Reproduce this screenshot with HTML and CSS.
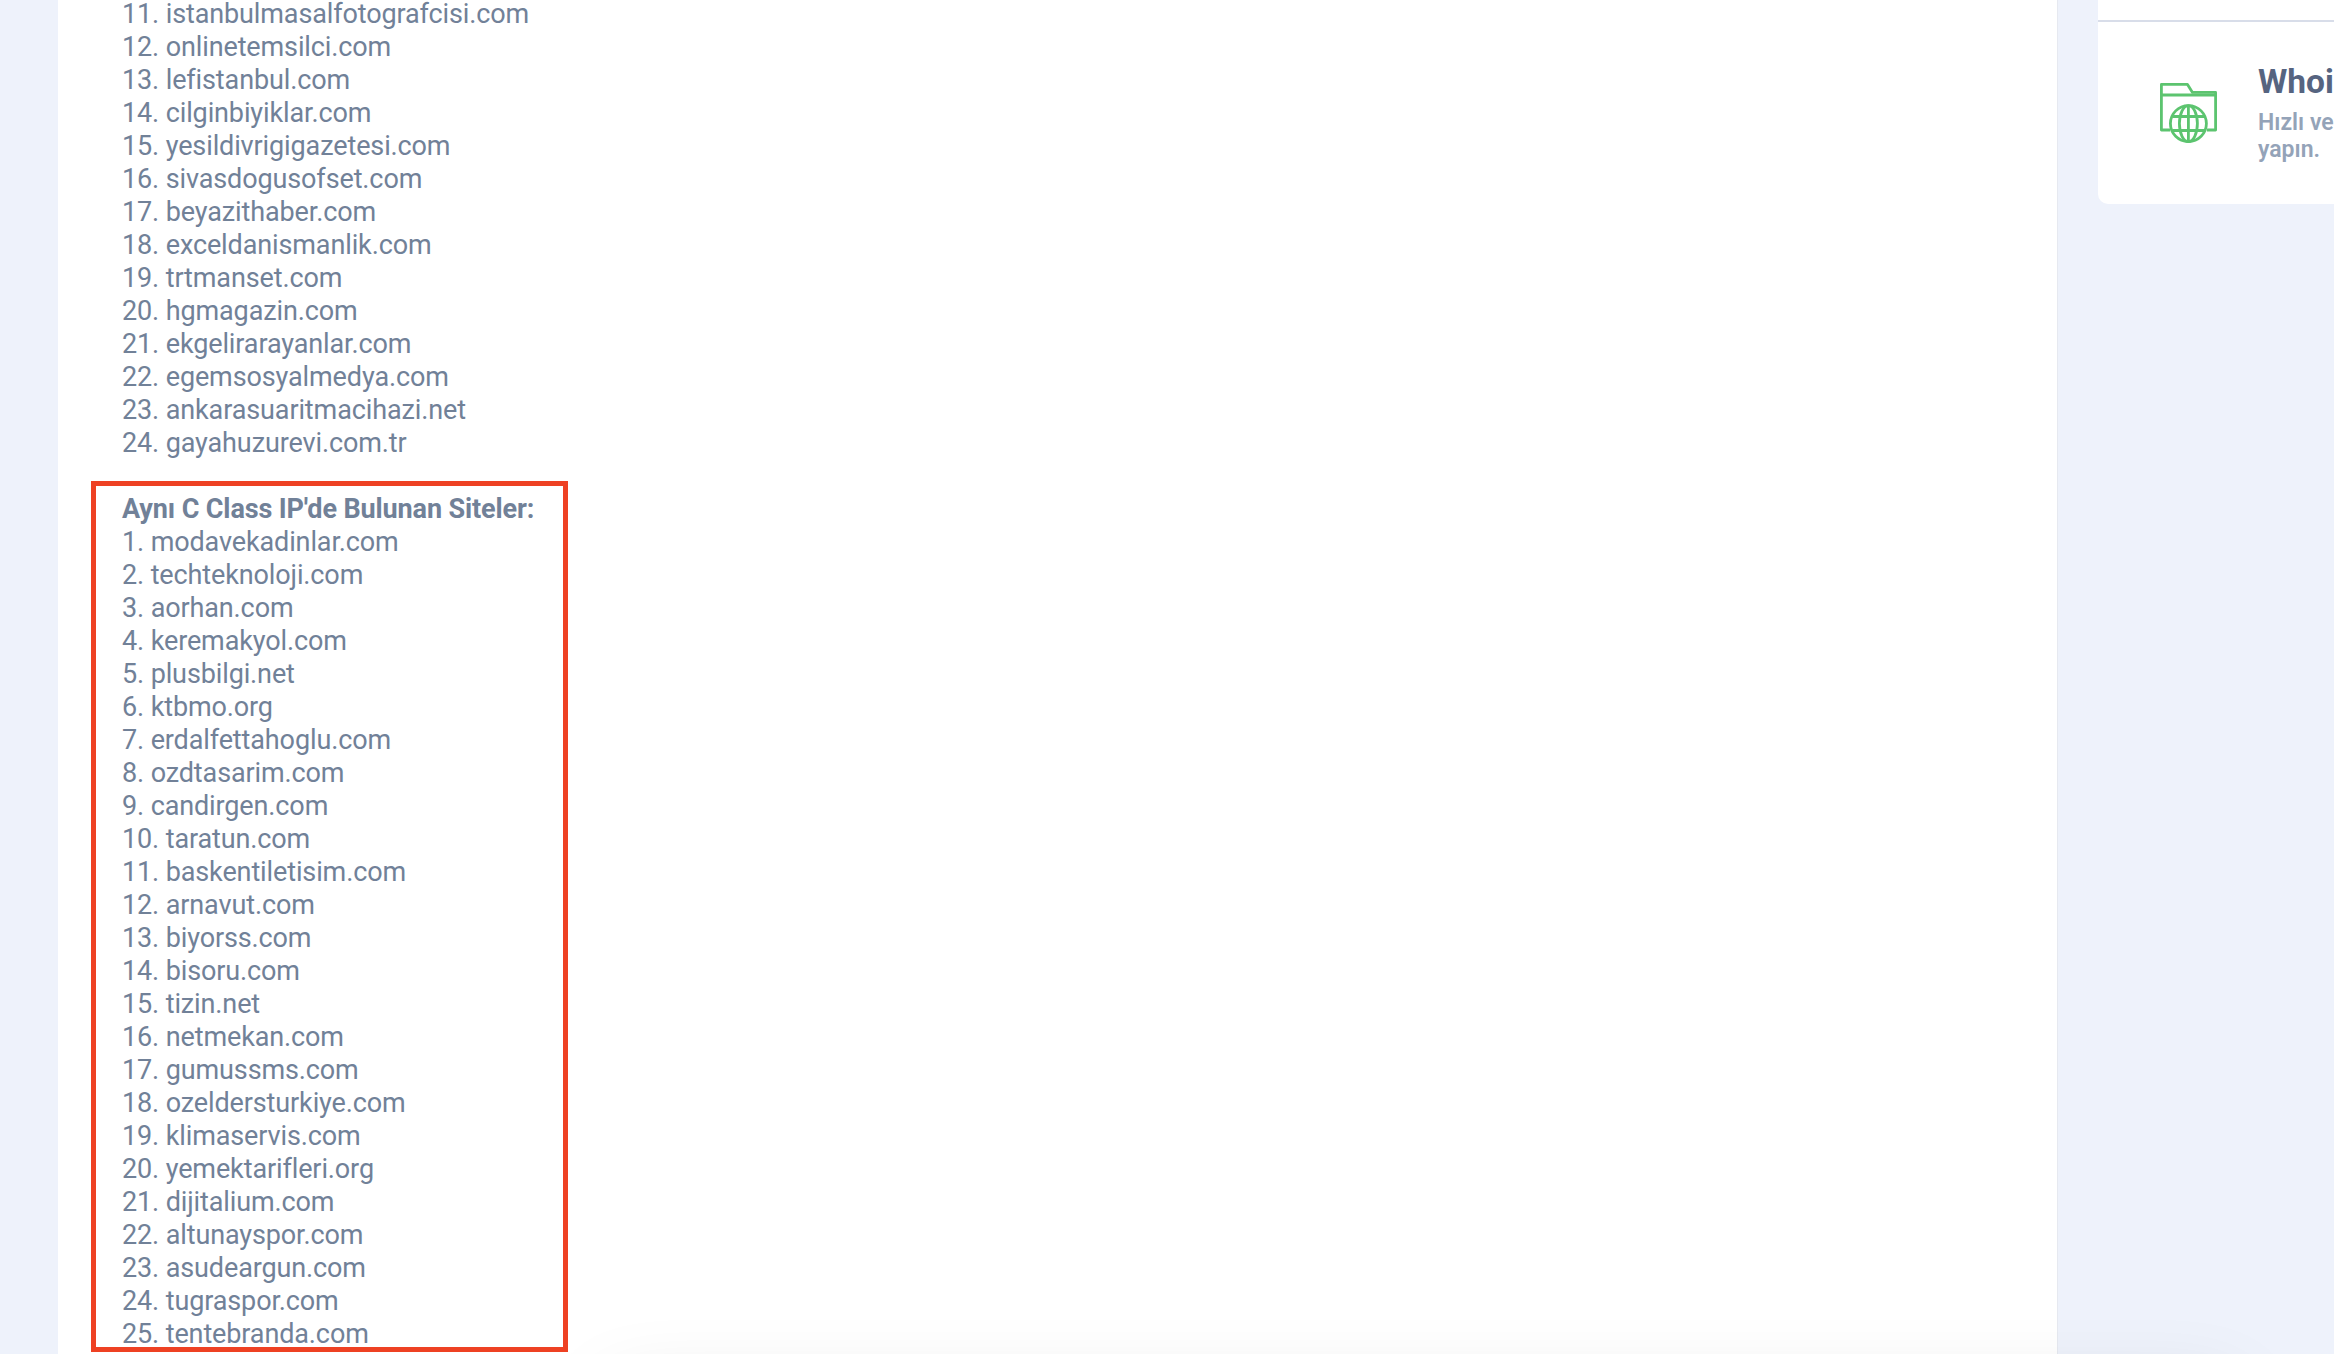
FILE: index.html
```html
<!DOCTYPE html>
<html lang="tr">
<head>
<meta charset="utf-8">
<title>Whois</title>
<link rel="stylesheet" href="styles.css">
</head>
<body>
<div class="page">
  <main class="main">
    <div class="sites">
      <div>11. istanbulmasalfotografcisi.com</div>
      <div>12. onlinetemsilci.com</div>
      <div>13. lefistanbul.com</div>
      <div>14. cilginbiyiklar.com</div>
      <div>15. yesildivrigigazetesi.com</div>
      <div>16. sivasdogusofset.com</div>
      <div>17. beyazithaber.com</div>
      <div>18. exceldanismanlik.com</div>
      <div>19. trtmanset.com</div>
      <div>20. hgmagazin.com</div>
      <div>21. ekgelirarayanlar.com</div>
      <div>22. egemsosyalmedya.com</div>
      <div>23. ankarasuaritmacihazi.net</div>
      <div>24. gayahuzurevi.com.tr</div>
    </div>
    <div class="sites marked">
      <strong>Aynı C Class IP'de Bulunan Siteler:</strong>
      <div>1. modavekadinlar.com</div>
      <div>2. techteknoloji.com</div>
      <div>3. aorhan.com</div>
      <div>4. keremakyol.com</div>
      <div>5. plusbilgi.net</div>
      <div>6. ktbmo.org</div>
      <div>7. erdalfettahoglu.com</div>
      <div>8. ozdtasarim.com</div>
      <div>9. candirgen.com</div>
      <div>10. taratun.com</div>
      <div>11. baskentiletisim.com</div>
      <div>12. arnavut.com</div>
      <div>13. biyorss.com</div>
      <div>14. bisoru.com</div>
      <div>15. tizin.net</div>
      <div>16. netmekan.com</div>
      <div>17. gumussms.com</div>
      <div>18. ozeldersturkiye.com</div>
      <div>19. klimaservis.com</div>
      <div>20. yemektarifleri.org</div>
      <div>21. dijitalium.com</div>
      <div>22. altunayspor.com</div>
      <div>23. asudeargun.com</div>
      <div>24. tugraspor.com</div>
      <div>25. tentebranda.com</div>
    </div>
  </main>
  <aside class="side">
    <div class="tool">
      <svg class="tool-icon" viewBox="0 0 57 60" fill="none" stroke="#5cc46f" stroke-width="2.8" stroke-linejoin="round">
        <path d="M10 47H1.4V1.4H27.5L32.5 9.4H55.6V47H47"/>
        <path d="M1.4 12H55.6"/>
        <circle cx="28.4" cy="40.6" r="18"/>
        <ellipse cx="28.4" cy="40.6" rx="9" ry="18"/>
        <path d="M28.4 22.6V58.6M12.5 33.5H44.3M12.5 47.5H44.3"/>
      </svg>
      <div class="tool-text">
        <div class="tool-title">Whois Sorgulama</div>
        <div class="tool-sub">Hızlı ve kolay sorgulama<br>yapın.</div>
      </div>
    </div>
  </aside>
</div>
<div class="floating"></div>
</body>
</html>
```
FILE: styles.css
```css
html, body {
  margin: 0;
  height: 100%;
  overflow: hidden;
}
body {
  background: #eef2fb;
  font-family: Roboto, "Liberation Sans", sans-serif;
}
.page {
  display: flex;
  align-items: flex-start;
  height: 1354px;
  padding-left: 58px;
  box-sizing: border-box;
  overflow: hidden;
}
.main {
  flex: 0 0 2000px;
  height: 100%;
  background: #fff;
  padding-left: 64px;
  box-sizing: border-box;
  border-right: 1px solid #e6e9f0;
}
.sites {
  color: #718198;
  font-size: 27px;
  line-height: 33px;
  letter-spacing: -0.12px;
}
.sites:first-child {
  margin-top: -2px;
}
.sites strong {
  display: block;
  font-weight: 700;
}
.marked {
  position: relative;
  margin-top: 33px;
  width: 430px;
}
.marked::after {
  content: "";
  position: absolute;
  left: -31px;
  top: -12px;
  width: 467px;
  height: 861px;
  border: 5px solid #ee4123;
  pointer-events: none;
}
.side {
  flex: 0 0 auto;
  margin-left: 40px;
  margin-top: 20px;
}
.side::before {
  content: "";
  display: block;
  width: 600px;
  height: 20px;
  margin-top: -20px;
  background: #fff;
}
.tool {
  display: flex;
  align-items: center;
  width: 600px;
  height: 184px;
  box-sizing: border-box;
  background: #fff;
  border-top: 2px solid #d8dde9;
  border-radius: 0 0 0 10px;
  padding-left: 62px;
}
.tool-icon {
  width: 57px;
  height: 60px;
  flex: none;
}
.tool-text {
  margin-left: 41px;
  margin-top: -1px;
}
.tool-title {
  color: #566480;
  font-size: 33.5px;
  line-height: 40px;
  font-weight: 700;
  white-space: nowrap;
  margin-bottom: 7px;
}
.tool-sub {
  color: #94a3b8;
  font-size: 23px;
  line-height: 27px;
  font-weight: 600;
  white-space: nowrap;
}
.floating {
  position: fixed;
  left: 610px;
  right: 100px;
  top: 1392px;
  height: 80px;
  box-shadow: 0 0 80px rgba(0, 0, 0, 0.13);
}
```
